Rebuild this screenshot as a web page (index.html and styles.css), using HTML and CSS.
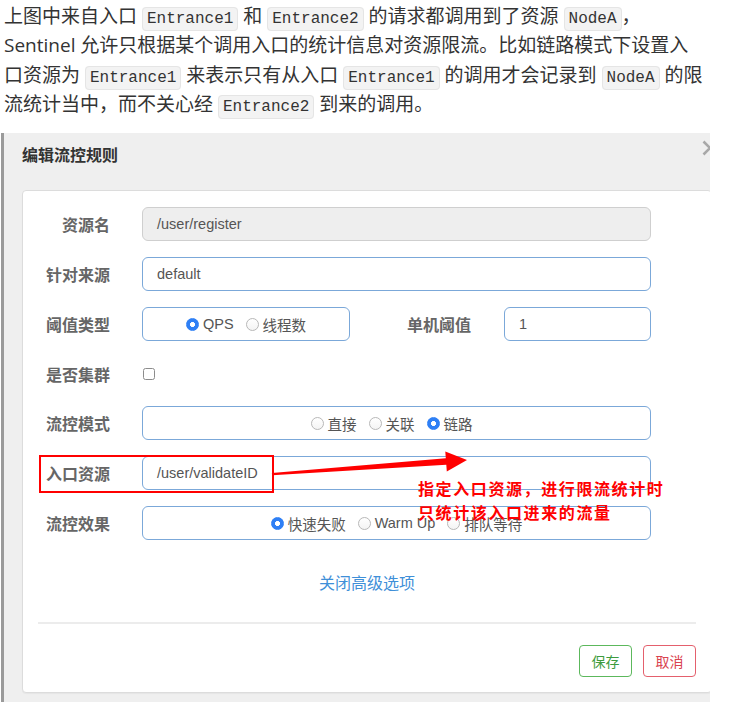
FILE: index.html
```html
<!DOCTYPE html>
<html lang="zh-CN">
<head>
<meta charset="utf-8">
<link rel="stylesheet" href="styles.css">
</head>
<body>
<p class="intro">上图中来自入口 <code>Entrance1</code> 和 <code>Entrance2</code> 的请求都调用到了资源 <code>NodeA</code>，<br>Sentinel 允许只根据某个调用入口的统计信息对资源限流。比如链路模式下设置入<br>口资源为 <code>Entrance1</code> 来表示只有从入口 <code>Entrance1</code> 的调用才会记录到 <code>NodeA</code> 的限<br>流统计当中，而不关心经 <code>Entrance2</code> 到来的调用。</p>

<div class="panel">
  <div class="panel-head">
    <h3 class="title">编辑流控规则</h3>
    <svg class="close" width="16" height="16" viewBox="0 0 16 16"><path d="M1.5 1.5 L14.5 14.5 M14.5 1.5 L1.5 14.5" stroke="#a8a8a8" stroke-width="2.6" fill="none"/></svg>
  </div>
  <div class="card">
    <div class="form">
      <div class="row">
        <span class="lbl">资源名</span>
        <div class="field disabled">/user/register</div>
      </div>
      <div class="row">
        <span class="lbl">针对来源</span>
        <div class="field">default</div>
      </div>
      <div class="row">
        <span class="lbl">阈值类型</span>
        <div class="split">
          <div class="field radios narrow">
            <span class="opt"><span class="radio on"></span>QPS</span>
            <span class="opt"><span class="radio"></span>线程数</span>
          </div>
          <span class="lbl lbl2">单机阈值</span>
          <div class="field small">1</div>
        </div>
      </div>
      <div class="row row-check">
        <span class="lbl">是否集群</span>
        <div class="check-wrap"><span class="checkbox"></span></div>
      </div>
      <div class="row">
        <span class="lbl">流控模式</span>
        <div class="field radios shift">
          <span class="opt"><span class="radio"></span>直接</span>
          <span class="opt"><span class="radio"></span>关联</span>
          <span class="opt"><span class="radio on"></span>链路</span>
        </div>
      </div>
      <div class="row">
        <span class="lbl">入口资源</span>
        <div class="field">/user/validateID</div>
      </div>
      <div class="row">
        <span class="lbl">流控效果</span>
        <div class="field radios">
          <span class="opt"><span class="radio on"></span>快速失败</span>
          <span class="opt"><span class="radio"></span>Warm Up</span>
          <span class="opt"><span class="radio"></span>排队等待</span>
        </div>
      </div>
    </div>
    <div class="more">关闭高级选项</div>
    <div class="divider"></div>
    <div class="actions">
      <span class="btn btn-save">保存</span>
      <span class="btn btn-cancel">取消</span>
    </div>
  </div>
</div>

<div class="annot-box"></div>
<svg class="annot-arrow" width="750" height="717" viewBox="0 0 750 717">
  <polygon points="271.9,473 445.8,458.3 445.3,451.5 467,460 446.8,471.5 446.3,464.7 272.1,475.2" fill="#ff0000"/>
</svg>
<div class="annot-text">指定入口资源，进行限流统计时<br>只统计该入口进来的流量</div>
</body>
</html>
```

FILE: styles.css
```css
body {
  margin: 0;
  position: relative;
  width: 750px;
  height: 717px;
  overflow: hidden;
  background: #fff;
  color: #333;
  font-family: "Open Sans", "Noto Sans CJK SC", sans-serif;
}

.intro {
  margin: 2px 0 0;
  padding-left: 4px;
  font-size: 19px;
  line-height: 29.4px;
  white-space: nowrap;
}

code {
  font-family: "Liberation Mono", monospace;
  font-size: 16px;
  line-height: 1;
  color: #333;
  background: #f3f3f3;
  border: 1px solid #e5e5e5;
  border-radius: 4px;
  padding: 2px 4px;
}

.panel {
  position: relative;
  margin: 13.4px 0 0 1px;
  width: 706px;
  border-left: 3px solid #9a9a9a;
  background: #efefef;
  overflow: hidden;
  padding-bottom: 9px;
}

.panel-head {
  height: 57px;
  box-sizing: border-box;
  padding: 12px 0 0 18px;
}

.title {
  margin: 0;
  font: bold 16px/22px "Liberation Sans", "Noto Sans CJK SC", sans-serif;
  color: #333;
}

.close {
  position: absolute;
  left: 698px;
  top: 6.5px;
}

.card {
  margin-left: 18px;
  width: 690px;
  box-sizing: border-box;
  background: #fff;
  border: 1px solid #dcdcdc;
  border-radius: 4px;
  padding: 16px 15px 15px;
  box-shadow: 0 1px 1px rgba(0, 0, 0, 0.04);
}

.form {
  display: flex;
  flex-direction: column;
}

.row {
  display: grid;
  grid-template-columns: 72px 509px;
  column-gap: 32px;
  align-items: center;
  height: 34px;
  margin-bottom: 16px;
}

.row-check {
  margin-bottom: 15px;
}

.lbl {
  text-align: right;
  font: bold 16px/22px "Noto Sans CJK SC", sans-serif;
  color: #666;
  white-space: nowrap;
}

.field {
  height: 34px;
  box-sizing: border-box;
  border: 1px solid #7ba8d9;
  border-radius: 6px;
  background: #fff;
  padding: 0 14px;
  display: flex;
  align-items: center;
  font: 14.5px "Liberation Sans", "Noto Sans CJK SC", sans-serif;
  color: #555;
}

.field.disabled {
  background: #eeeeee;
  border-color: #cfcfcf;
}

.split {
  display: flex;
  align-items: center;
}

.field.narrow {
  width: 208px;
}

.lbl2 {
  width: 121px;
  box-sizing: border-box;
}

.field.small {
  width: 147px;
  margin-left: 33px;
}

.radios {
  justify-content: center;
  gap: 12px;
}

.radios.shift {
  padding-right: 24px;
}

.opt {
  display: flex;
  align-items: center;
  gap: 4px;
  white-space: nowrap;
}

.radio {
  width: 13px;
  height: 13px;
  box-sizing: border-box;
  border-radius: 50%;
  border: 1px solid #b8b8b8;
  background: linear-gradient(#fff, #f4f4f4);
}

.radio.on {
  border-color: #2e7ff5;
  background: radial-gradient(circle, #fff 0, #fff 2.2px, #2e7ff5 2.8px);
}

.check-wrap {
  display: flex;
  align-items: center;
  padding-left: 1px;
}

.checkbox {
  width: 12px;
  height: 12px;
  box-sizing: border-box;
  border: 1px solid #8c8c8c;
  border-radius: 2.5px;
  background: #fff;
}

.more {
  margin-top: 15px;
  text-align: center;
  font: 16px/22px "Noto Sans CJK SC", sans-serif;
  color: #3f8fd8;
}

.divider {
  margin-top: 29px;
  height: 2px;
  background: #ececec;
}

.actions {
  margin-top: 21px;
  display: flex;
  justify-content: flex-end;
  gap: 11px;
}

.btn {
  width: 53px;
  height: 32px;
  box-sizing: border-box;
  border: 1px solid;
  border-radius: 4px;
  background: #fff;
  display: flex;
  align-items: center;
  justify-content: center;
  font: 14px "Noto Sans CJK SC", sans-serif;
}

.btn-save {
  border-color: #5cb85c;
  color: #3d9b3d;
}

.btn-cancel {
  border-color: #e4606d;
  color: #d9434f;
}

.annot-box {
  position: absolute;
  left: 39px;
  top: 455px;
  width: 235px;
  height: 38px;
  box-sizing: border-box;
  border: 2px solid #ff0000;
}

.annot-arrow {
  position: absolute;
  left: 0;
  top: 0;
  pointer-events: none;
}

.annot-text {
  position: absolute;
  left: 418px;
  top: 476px;
  color: #ff0000;
  font: bold 16px/24px "Noto Sans CJK SC", sans-serif;
  letter-spacing: 1.6px;
  white-space: nowrap;
}
```
